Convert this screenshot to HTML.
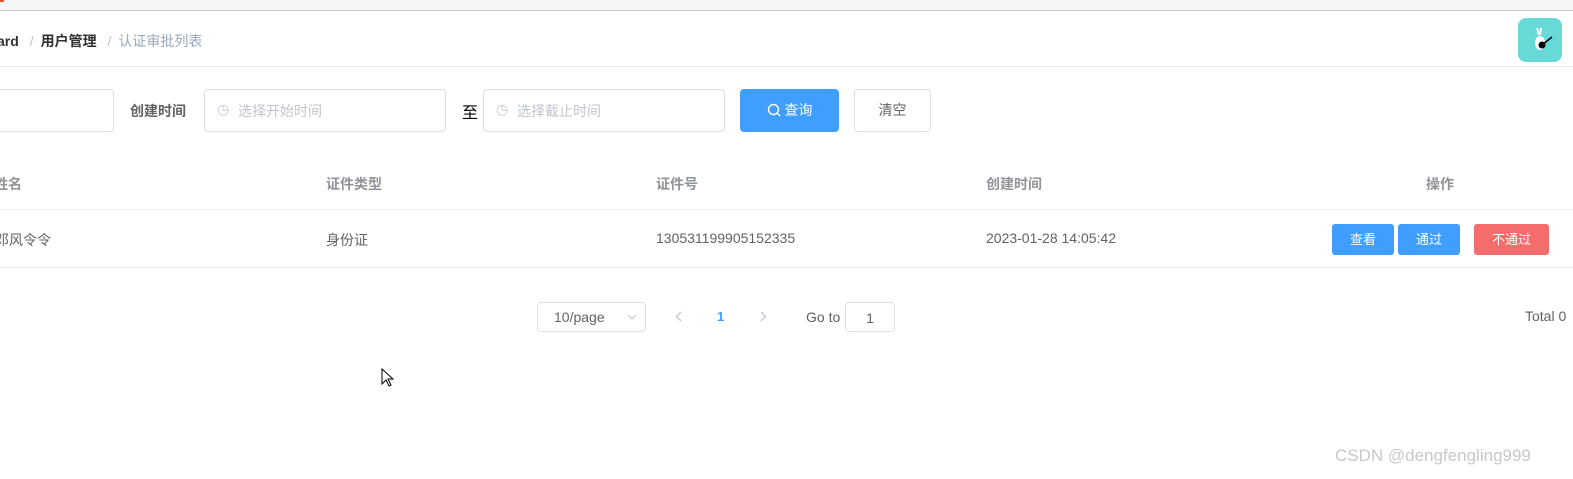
<!DOCTYPE html>
<html><head><meta charset="utf-8"><style>
*{margin:0;padding:0;box-sizing:border-box}
html,body{width:1573px;height:479px;overflow:hidden}
body{background:#fff;font-family:"Liberation Sans","Noto Sans CJK SC",sans-serif;font-size:14px;color:#606266;position:relative}
.a{position:absolute}
.inp{position:absolute;border:1px solid #dcdfe6;border-radius:4px;background:#fff}
.ph{color:#c0c4cc;font-size:14px}
.btn{position:absolute;border-radius:3px;color:#fff;font-size:13px;text-align:center;line-height:31px;height:31px}
.hl{position:absolute;left:0;width:1573px;height:1px;background:#ebeef5}
</style></head><body>
<div class="a" style="left:0;top:0;width:1573px;height:11px;background:#f6f6f6;border-bottom:1px solid #c6c6c6"></div>
<div class="a" style="left:0;top:0;width:4px;height:2px;background:#f05030"></div>
<div class="a" style="top:31px;left:-3px;font-size:14px;color:#303133;font-weight:bold">ard <span style="color:#c0c4cc;font-weight:normal;margin:0 7px">/</span>用户管理 <span style="color:#c0c4cc;font-weight:normal;margin:0 7px">/</span><span style="color:#97a8be;font-weight:normal">认证审批列表</span></div>
<div class="a" style="left:1518px;top:18px;width:44px;height:44px;border-radius:8px;background:#67d9d6"><svg width="44" height="44"><path d="M19 10l2 7M23 10l-1 7" stroke="#fff" stroke-width="2"/><ellipse cx="22" cy="25" rx="5" ry="7" fill="#fff"/><circle cx="24" cy="27" r="3.5" fill="#000"/><path d="M24 27l10-8" stroke="#000" stroke-width="1.5"/></svg></div>
<div class="hl" style="top:66px;background:#e6e6e6"></div>
<div class="inp" style="left:-10px;top:89px;width:124px;height:43px"></div>
<div class="a" style="left:130px;top:101px;font-weight:bold;color:#606266">创建时间</div>
<div class="inp" style="left:204px;top:89px;width:242px;height:43px"><span class="a ph" style="left:12px;top:11px">◷</span><span class="a ph" style="left:33px;top:11px">选择开始时间</span></div>
<div class="a" style="left:462px;top:99px;font-size:16px;color:#000">至</div>
<div class="inp" style="left:483px;top:89px;width:242px;height:43px"><span class="a ph" style="left:12px;top:11px">◷</span><span class="a ph" style="left:33px;top:11px">选择截止时间</span></div>
<div class="a" style="left:740px;top:89px;width:99px;height:43px;background:#409eff;border-radius:4px;color:#fff;text-align:center;line-height:43px">
<svg width="14" height="14" style="vertical-align:-2px"><circle cx="6.5" cy="6.5" r="5" fill="none" stroke="#fff" stroke-width="1.4"/><path d="M10 10l3 3" stroke="#fff" stroke-width="1.4"/></svg> 查询</div>
<div class="inp" style="left:854px;top:89px;width:77px;height:43px;text-align:center;line-height:41px;color:#606266">清空</div>
<div class="a" style="top:174px;left:-6px;font-weight:bold;color:#909399">姓名</div>
<div class="a" style="top:174px;left:326px;font-weight:bold;color:#909399">证件类型</div>
<div class="a" style="top:174px;left:656px;font-weight:bold;color:#909399">证件号</div>
<div class="a" style="top:174px;left:986px;font-weight:bold;color:#909399">创建时间</div>
<div class="a" style="top:174px;left:1426px;font-weight:bold;color:#909399">操作</div>
<div class="hl" style="top:209px"></div>
<div class="a" style="top:230px;left:-5px">邓风令令</div>
<div class="a" style="top:230px;left:326px">身份证</div>
<div class="a" style="top:230px;left:656px">130531199905152335</div>
<div class="a" style="top:230px;left:986px">2023-01-28 14:05:42</div>
<div class="btn" style="left:1332px;top:224px;width:62px;background:#409eff">查看</div>
<div class="btn" style="left:1398px;top:224px;width:62px;background:#409eff">通过</div>
<div class="btn" style="left:1474px;top:224px;width:75px;background:#f56c6c">不通过</div>
<div class="hl" style="top:267px"></div>
<div class="inp" style="left:537px;top:302px;width:109px;height:30px;font-size:14px;line-height:28px;padding-left:16px">10/page<svg class="a" style="right:8px;top:11px" width="10" height="6"><path d="M1 1l4 4 4-4" fill="none" stroke="#c0c4cc"/></svg></div>
<svg class="a" style="left:675px;top:311px" width="7" height="11"><path d="M6 1L1.5 5.5 6 10" fill="none" stroke="#c0c4cc" stroke-width="1.3"/></svg>
<div class="a" style="left:717px;top:309px;color:#409eff;font-weight:bold;font-size:13px">1</div>
<svg class="a" style="left:760px;top:311px" width="7" height="11"><path d="M1 1l4.5 4.5L1 10" fill="none" stroke="#c0c4cc" stroke-width="1.3"/></svg>
<div class="a" style="left:806px;top:309px;font-size:14px">Go to</div>
<div class="inp" style="left:845px;top:302px;width:50px;height:30px;text-align:center;line-height:30px">1</div>
<div class="a" style="left:1525px;top:308px;font-size:14px">Total 0</div>
<div class="a" style="left:1335px;top:446px;font-size:17px;color:#c8c8c8">CSDN @dengfengling999</div>
<svg class="a" style="left:381px;top:368px" width="14" height="20"><path d="M1 1v15l4-4 3 6 2-1-3-6h5z" fill="#fff" stroke="#000"/></svg>
</body></html>
